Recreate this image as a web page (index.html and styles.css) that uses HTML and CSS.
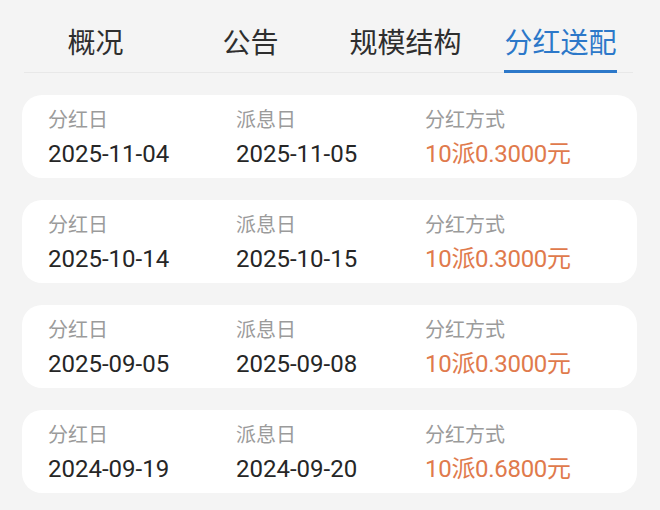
FILE: index.html
```html
<!DOCTYPE html>
<html lang="zh-CN">
<head>
<meta charset="utf-8">
<link rel="stylesheet" href="styles.css">
</head>
<body>
<div class="page">
  <div class="tabbar">
    <nav class="tabs">
      <div class="tab"><span class="tab-label">概况</span></div>
      <div class="tab"><span class="tab-label">公告</span></div>
      <div class="tab"><span class="tab-label">规模结构</span></div>
      <div class="tab active"><span class="tab-label">分红送配</span></div>
    </nav>
  </div>
  <div class="list">
    <div class="card">
      <div class="col"><div class="label">分红日</div><div class="value">2025-11-04</div></div>
      <div class="col"><div class="label">派息日</div><div class="value">2025-11-05</div></div>
      <div class="col"><div class="label">分红方式</div><div class="value orange">10派0.3000元</div></div>
    </div>
    <div class="card">
      <div class="col"><div class="label">分红日</div><div class="value">2025-10-14</div></div>
      <div class="col"><div class="label">派息日</div><div class="value">2025-10-15</div></div>
      <div class="col"><div class="label">分红方式</div><div class="value orange">10派0.3000元</div></div>
    </div>
    <div class="card">
      <div class="col"><div class="label">分红日</div><div class="value">2025-09-05</div></div>
      <div class="col"><div class="label">派息日</div><div class="value">2025-09-08</div></div>
      <div class="col"><div class="label">分红方式</div><div class="value orange">10派0.3000元</div></div>
    </div>
    <div class="card">
      <div class="col"><div class="label">分红日</div><div class="value">2024-09-19</div></div>
      <div class="col"><div class="label">派息日</div><div class="value">2024-09-20</div></div>
      <div class="col"><div class="label">分红方式</div><div class="value orange">10派0.6800元</div></div>
    </div>
  </div>
</div>
</body>
</html>
```

FILE: styles.css
```css
html, body {
  margin: 0;
  padding: 0;
  background: #f4f4f4;
}
body {
  width: 660px;
  height: 510px;
  overflow: hidden;
  font-family: Roboto, "Noto Sans CJK SC", sans-serif;
}
.page {
  display: flex;
  flex-direction: column;
}
.tabbar {
  margin: 0 27px 0 24px;
  border-bottom: 1px solid #e8e8e8;
}
.tabs {
  display: grid;
  grid-template-columns: repeat(4, 155px);
  margin-left: -6px;
}
.tab {
  display: flex;
  justify-content: center;
  padding-top: 27px;
}
.tab-label {
  font-family: "Noto Sans CJK SC", sans-serif;
  font-size: 28px;
  line-height: 28px;
  color: #2e2e2e;
  padding-bottom: 15px;
  border-bottom: 3px solid transparent;
  margin-bottom: -1px;
}
.tab.active .tab-label {
  color: #2c78c9;
  border-bottom-color: #2c78c9;
}
.list {
  display: flex;
  flex-direction: column;
  gap: 22px;
  margin: 22px 23px 0 22px;
}
.card {
  background: #ffffff;
  border-radius: 20px;
  height: 83px;
  box-sizing: border-box;
  padding: 12px 0 0 26px;
  display: grid;
  grid-template-columns: 188px 189px 1fr;
}
.col {
  display: flex;
  flex-direction: column;
  gap: 9px;
}
.label {
  font-family: "Noto Sans CJK SC", sans-serif;
  font-size: 20px;
  line-height: 24px;
  color: #9b9b9b;
}
.value {
  font-size: 24px;
  line-height: 28px;
  color: #262626;
}
.value.orange {
  color: #e07a4c;
  letter-spacing: -0.3px;
}
```
